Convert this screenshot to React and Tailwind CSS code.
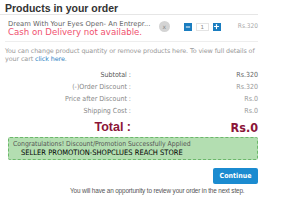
import { Plus, Minus } from 'lucide-react';

export default function App() {
    // order summary rows
    const rows = [
        { label: 'Subtotal :', value: 'Rs.320', dark: true },
        { label: '(-)Order Discount :', value: 'Rs.320' },
        { label: 'Price after Discount :', value: 'Rs.0' },
        { label: 'Shipping Cost :', value: 'Rs.0' },
    ];

    return (
        <div className="w-[300px] h-[205px] bg-white overflow-hidden font-['DejaVu_Sans',sans-serif]">
            <div className="w-[258px]">
                {/* Header */}
                <h1 className="pl-[5px] pt-[3px] h-[15px] text-[10.5px] leading-[10px] font-bold text-[#333] font-['Liberation_Sans',sans-serif] border-b border-[#e6e6e6]">
                    Products in your order
                </h1>

                {/* Product row */}
                <div className="ml-[5px] flex items-center h-[27px] border-b border-[#eeeeee]">
                    <div className="pl-[3px] flex-1 min-w-0">
                        <div className="text-[6.8px] leading-[8px] text-[#666] whitespace-nowrap">
                            Dream With Your Eyes Open- An Entrepr...
                        </div>
                        <div className="text-[8.6px] leading-[9px] text-[#f0506e] whitespace-nowrap">
                            Cash on Delivery not available.
                        </div>
                    </div>
                    <div className="w-[11px] h-[11px] rounded-full bg-[#d4d4d4] flex items-center justify-center text-[6px] text-[#888] mr-[14px] mb-[3px]">
                        x
                    </div>
                    <div className="flex items-center mb-[3px]">
                        <div className="w-[8px] h-[8px] bg-[#1a7dc0] flex items-center justify-center">
                            <Minus size={6} strokeWidth={4} className="text-white" />
                        </div>
                        <div className="w-[13px] h-[8px] mx-[4px] border border-[#e4e4e4] text-[5.5px] leading-[6px] text-[#888] text-center">
                            1
                        </div>
                        <div className="w-[8px] h-[8px] bg-[#1a7dc0] flex items-center justify-center">
                            <Plus size={7} strokeWidth={4} className="text-white" />
                        </div>
                    </div>
                    <div className="ml-[17px] mb-[3px] text-[6.5px] text-[#aaa] font-['DejaVu_Sans_Condensed',sans-serif]">
                        Rs.320
                    </div>
                </div>

                {/* Info text */}
                <div className="pl-[5px] pt-[5px] text-[6.4px] leading-[8px] text-[#999] tracking-[-0.1px]">
                    <div className="whitespace-nowrap">You can change product quantity or remove products here. To view full details of</div>
                    <div>your cart <span className="text-[#2a7fc4]">click here</span>.</div>
                </div>

                {/* Summary */}
                <div className="mt-[6px] font-['DejaVu_Sans_Condensed',sans-serif] text-[7px] leading-[12px]">
                    {rows.map((row) => (
                        <div key={row.label} className="flex">
                            <div className={`w-[131px] text-right ${row.dark ? 'text-[#555]' : 'text-[#888]'}`}>{row.label}</div>
                            <div className={`flex-1 text-right ${row.dark ? 'text-[#666]' : 'text-[#999]'}`}>{row.value}</div>
                        </div>
                    ))}
                    <div className="flex mt-[3px] text-[12.5px] leading-[15px] font-bold text-[#8b1538]">
                        <div className="w-[131px] text-right font-['Liberation_Sans',sans-serif]">Total :</div>
                        <div className="flex-1 text-right">Rs.0</div>
                    </div>
                </div>

                {/* Promotion box */}
                <div className="ml-[8px] mt-[2px] h-[23px] bg-[#b3deb1] border border-dashed border-[#6bb86a] rounded-[2px] px-[4px] pt-[2px] font-['DejaVu_Sans_Condensed',sans-serif]">
                    <div className="text-[6.8px] leading-[8px] text-[#555] whitespace-nowrap">
                        Congratulations! Discount/Promotion Successfully Applied
                    </div>
                    <div className="pl-[8px] text-[7.5px] leading-[9px] text-black whitespace-nowrap">
                        SELLER PROMOTION-SHOPCLUES REACH STORE
                    </div>
                </div>

                {/* Continue */}
                <div className="flex justify-end mt-[8px]">
                    <button className="w-[45px] h-[16px] rounded-[2px] bg-[#1b8bd0] text-white text-[7px] font-bold font-['DejaVu_Sans_Condensed',sans-serif]">
                        Continue
                    </button>
                </div>
                <p className="mt-[3px] pl-[70px] text-[6.4px] leading-[8px] text-[#555] font-['Liberation_Sans',sans-serif] tracking-[-0.15px] whitespace-nowrap">
                    You will have an opportunity to review your order in the next step.
                </p>
            </div>
        </div>
    );
}
